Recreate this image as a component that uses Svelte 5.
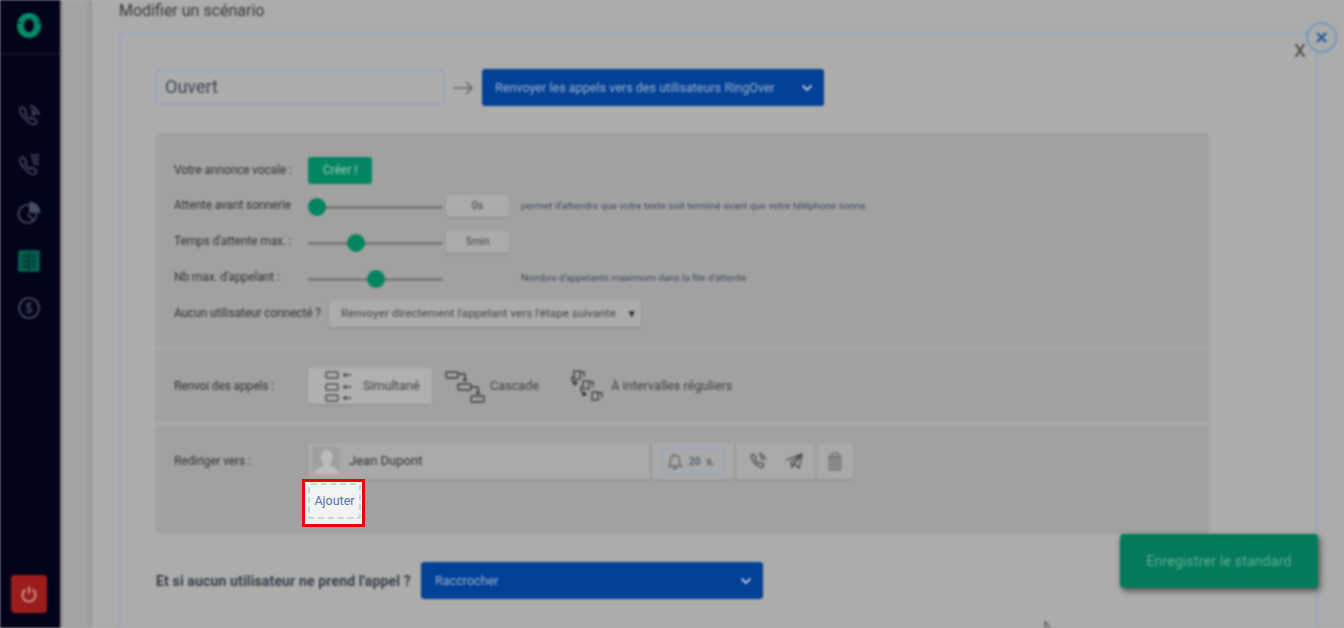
<script>
  const sliders = [
    { label: "Attente avant sonnerie", pct: 7, value: "0s", help: "permet d'attendre que votre texte soit terminé avant que votre téléphone sonne" },
    { label: "Temps d'attente max. :", pct: 35.5, value: "5min", help: "" },
    { label: "Nb max. d'appelant :", pct: 50, value: "", help: "Nombre d'appelants maximum dans la file d'attente" }
  ];
</script>

<div class="screen">
  <div class="blurred">
    <aside class="sidebar">
      <div class="logo">
        <svg width="24" height="25" viewBox="0 0 24 25">
          <path fill-rule="evenodd" fill="#05906b" d="M12 0C19 0 24 5.500 24 12.500S19 25 12 25 0 19.500 0 12.500 5 0 12 0ZM12 6C9 6 7 9 7 12.500S9 19 12 19 17 16 17 12.500 15 6 12 6Z"/>
          <path d="M0 9.500h4M20 9.500h4" stroke="#03332f" stroke-width="1.500"/>
        </svg>
      </div>
      <nav class="nav">
        <svg width="24" height="24" viewBox="0 0 24 24" fill="none" stroke="#49516a" stroke-width="1.600">
          <path d="M3 5c1-2 3-2 4-1l2 3c.5 1 0 2-1 3 1 2 3 4 5 5 1-1 2-1.500 3-1l3 2c1 1 .5 3-1 4-2 1-5 0-9-4S2 8 3 5Z"/>
          <path d="M13 2c4 0 8 4 9 9M14 6c2 0 4 2 4 5M15 9l2 2" stroke-width="2"/>
        </svg>
        <svg width="24" height="24" viewBox="0 0 24 24" fill="none" stroke="#49516a" stroke-width="1.600">
          <path d="M3 6c1-2 3-2 4-1l2 3c.5 1 0 2-1 3 1 2 3 4 5 5 1-1 2-1.500 3-1l3 2c1 1 .5 3-1 4-2 1-5 0-9-4S2 9 3 6Z"/>
          <path d="M14 2h8M14 5h8M15 8h7M16 11h6" stroke-width="1.500"/>
        </svg>
        <svg width="24" height="24" viewBox="0 0 24 24" fill="none" stroke="#49516a" stroke-width="1.700">
          <circle cx="10.500" cy="13" r="9"/>
          <path d="M13 1.500a9.500 9.500 0 0 1 9.500 9.500H13Z" fill="#49516a"/>
          <path d="M10.500 13l6 6"/>
        </svg>
        <svg width="22" height="22" viewBox="0 0 22 22" fill="#04604b" stroke="#05705a" stroke-width="1.500">
          <rect x="1" y="1" width="20" height="20" rx="1"/>
          <path d="M5 6h4M5 11h4M5 16h4M14 6h3M14 11h3M14 16h3M11 2v18" fill="none" stroke="#03252a"/>
        </svg>
        <svg width="24" height="24" viewBox="0 0 24 24" fill="none" stroke="#49516a" stroke-width="1.700">
          <circle cx="12" cy="12" r="10"/>
          <path d="M15 8.500c-1-1-5-1.500-5.500.8C9 12 15 11.500 14.700 14.500c-.3 2-4.500 2-5.700.5M12 6v12" stroke-width="1.300"/>
        </svg>
      </nav>
      <div class="power">
        <svg width="18" height="18" viewBox="0 0 18 18" fill="none" stroke="#cf9393" stroke-width="2.200">
          <path d="M5.500 4.500a6.500 6.500 0 1 0 7 0"/>
          <path d="M9 1.500v7"/>
        </svg>
      </div>
    </aside>

    <main class="main">
      <div class="page">
        <h1 class="title">Modifier un scénario</h1>
        <section class="card">
          <div class="head">
            <div class="name">Ouvert</div>
            <svg class="arrow" width="21" height="14" viewBox="0 0 21 14" fill="none" stroke="#6f6f6f" stroke-width="1.500">
              <path d="M0 7h19M13 1l6 6-6 6"/>
            </svg>
            <div class="blue">
              <span>Renvoyer les appels vers des utilisateurs RingOver</span>
              <svg width="12" height="8" viewBox="0 0 12 8" fill="none" stroke="#c4cfe4" stroke-width="1.800"><path d="M1.500 1.500 6 6l4.500-4.500"/></svg>
            </div>
          </div>

          <div class="panel">
            <div class="sec first">
              <div class="row">
                <span class="label">Votre annonce vocale :</span>
                <span class="create">Créer !</span>
              </div>
              {#each sliders as s}
                <div class="row">
                  <span class="label lifted">{s.label}</span>
                  <span class="track"><i class="thumb" style="left: {s.pct}%"></i></span>
                  {#if s.value}
                    <span class="value">{s.value}</span>
                  {:else}
                    <span class="value none"></span>
                  {/if}
                  <span class="help">{s.help}</span>
                </div>
              {/each}
              <div class="row">
                <span class="label auto lifted">Aucun utilisateur connecté ?</span>
                <span class="dropdown">Renvoyer directement l'appelant vers l'étape suivante <b>▾</b></span>
              </div>
            </div>

            <div class="sec second">
              <span class="label">Renvoi des appels :</span>
              <div class="tabs">
                <div class="tab active">
                  <svg width="27" height="34" viewBox="0 0 27 34" fill="none" stroke="#4f4f4f" stroke-width="1.400">
                    <rect x="1" y="3" width="12" height="6" rx="1"/><rect x="1" y="15" width="12" height="6" rx="1"/><rect x="1" y="26" width="12" height="6" rx="1"/>
                    <path d="M26 6h-7M26 18h-7M26 29h-7" stroke-width="1.300"/>
                    <path d="M21 3.500 17.500 6l3.500 2.500ZM21 15.500 17.500 18l3.500 2.500ZM21 26.500 17.500 29l3.500 2.500Z" fill="#4f4f4f" stroke="none"/>
                  </svg>
                  <span>Simultané</span>
                </div>
                <div class="tab cascade">
                  <svg width="40" height="34" viewBox="0 0 40 34" fill="none" stroke="#404040" stroke-width="1.400">
                    <rect x="1" y="3" width="12" height="6" rx="1"/><rect x="13" y="15" width="13" height="6" rx="1"/><rect x="26" y="27" width="13" height="6" rx="1"/>
                    <path d="M13 5h7v7M18 10l2 2 2-2M26 18h7v7M31 23l2 2 2-2"/>
                  </svg>
                  <span>Cascade</span>
                </div>
                <div class="tab interval">
                  <svg width="35" height="34" viewBox="0 0 35 34" fill="none" stroke="#404040" stroke-width="1.300">
                    <rect x="5" y="2" width="6" height="8" /><rect x="14" y="12" width="6" height="8"/><rect x="23" y="23" width="6" height="8"/>
                    <path d="M4 7c-2 2-2 5 1 6M13 17c-2 2-2 5 1 7M11 3h4v5M20 13h4v5M29 24h4v5" />
                    <circle cx="6" cy="14" r="1.700" fill="#404040"/><circle cx="15" cy="25" r="1.700" fill="#404040"/>
                  </svg>
                  <span>À intervalles réguliers</span>
                </div>
              </div>
            </div>

            <div class="sec third">
              <div class="redir">
                <span class="label">Rediriger vers :</span>
                <div class="tile user">
                  <svg class="avatar" width="27" height="27" viewBox="0 0 27 27">
                    <rect width="27" height="27" rx="2" fill="#a6a6a6"/>
                    <path d="M13.500 3c4 0 6 3 6 7s-2 6-3 8c2 2 8 2 10 9H1c2-7 8-7 10-9-1-2-3-4-3-8s2-7 5.500-7Z" fill="#c4c4c4"/>
                  </svg>
                  <span>Jean Dupont</span>
                </div>
                <div class="tile ring">
                  <div class="ringbox">
                    <svg width="16" height="17" viewBox="0 0 16 17" fill="none" stroke="#666" stroke-width="1.300">
                      <path d="M2 13c1.500-1.500 1.500-3 1.500-5.500S5 2 8 2s4.500 3 4.500 5.500.0 4 1.500 5.500ZM6 14.500c.5 2 3.500 2 4 0"/>
                    </svg>
                    <span>20</span><span>s.</span>
                  </div>
                </div>
                <div class="tile acts">
                  <svg width="18" height="18" viewBox="0 0 24 24" fill="none" stroke="#555" stroke-width="1.900">
                    <path d="M3 5c1-2 3-2 4-1l2 3c.5 1 0 2-1 3 1 2 3 4 5 5 1-1 2-1.500 3-1l3 2c1 1 .5 3-1 4-2 1-5 0-9-4S2 8 3 5Z"/>
                    <path d="M13 2c4 0 8 4 9 9M14 6c2 0 4 2 4 5"/>
                  </svg>
                  <svg width="18" height="18" viewBox="0 0 18 18" fill="none" stroke="#4a4a4a" stroke-width="1.300">
                    <path d="M1 8 17 2l-3 14-5-4-2 3-1-5L17 2 9 12"/>
                  </svg>
                </div>
                <div class="tile trash">
                  <svg width="16" height="19" viewBox="0 0 16 19" fill="#9a9a9a" stroke="#7d7d7d" stroke-width="1.600">
                    <path d="M1 4h14M5 3V1h6v2" fill="none"/>
                    <path d="M2.500 5.500V18h11V5.500Z"/>
                    <path d="M5.500 7v9M8 7v9M10.500 7v9" stroke-width="1"/>
                  </svg>
                </div>
              </div>
              <div class="slot" aria-hidden="true"></div>
            </div>
          </div>

          <div class="fallback">
            <strong>Et si aucun utilisateur ne prend l'appel ?</strong>
            <div class="blue wide">
              <span>Raccrocher</span>
              <svg width="12" height="8" viewBox="0 0 12 8" fill="none" stroke="#c4cfe4" stroke-width="1.800"><path d="M1.500 1.500 6 6l4.500-4.500"/></svg>
            </div>
          </div>

          <span class="x">X</span>
        </section>
      </div>

      <button class="save">Enregistrer le standard</button>
      <div class="close">
        <svg width="13" height="13" viewBox="0 0 13 13" stroke="#255ead" stroke-width="2.400"><path d="M2 2l9 9M11 2l-9 9"/></svg>
      </div>
      <svg class="cursor" width="12" height="14" viewBox="0 0 12 14"><path d="M1 1v11l3-3 4 1Z" fill="#a0a0a0" stroke="#444"/></svg>
    </main>
  </div>

  <div class="spotlight"><div class="add">Ajouter</div></div>
</div>

<style>
  :global(body) {
    margin: 0;
    background: #b1b1b1;
  }
  .screen {
    position: relative;
    width: 1344px;
    height: 628px;
    overflow: hidden;
    font-family: Roboto, "Liberation Sans", sans-serif;
  }
  .blurred {
    display: flex;
    width: 1344px;
    height: 628px;
    filter: blur(1px) brightness(0.96);
    overflow: hidden;
  }
  .sidebar {
    flex: 0 0 60px;
    width: 60px;
    height: 628px;
    box-sizing: border-box;
    padding-right: 3px;
    display: flex;
    flex-direction: column;
    align-items: center;
    background: #03031a;
    position: relative;
    z-index: 2;
    box-shadow: 1px 0 3px rgba(0, 0, 0, 0.4);
  }
  .logo {
    width: 60px;
    margin-right: -3px;
    padding-right: 3px;
    height: 55px;
    box-sizing: border-box;
    padding-top: 13px;
    display: flex;
    justify-content: center;
    border-bottom: 2px solid #14182f;
  }
  .nav {
    margin-top: 49px;
    display: flex;
    flex-direction: column;
    align-items: center;
    gap: 24.500px;
  }
  .power {
    margin-top: auto;
    margin-bottom: 15px;
    width: 36px;
    height: 38px;
    border-radius: 4px;
    background: #a21d1d;
    display: flex;
    align-items: center;
    justify-content: center;
  }
  .main {
    flex: 1;
    position: relative;
    height: 628px;
    background: #ababab;
    padding-left: 32px;
    box-sizing: border-box;
    overflow: hidden;
  }
  .page {
    height: 100%;
    background: #b2b2b2;
    box-shadow: -3px 0 5px rgba(0, 0, 0, 0.08);
    padding-left: 27px;
  }
  .title {
    margin: 0;
    padding-top: 2px;
    height: 32px;
    box-sizing: border-box;
    font-size: 16px;
    line-height: 18px;
    font-weight: 400;
    color: #3a3a3a;
  }
  .card {
    position: relative;
    width: 1199px;
    height: 640px;
    box-sizing: border-box;
    border: 2px solid #a2adbf;
    border-radius: 4px;
    padding: 35px 0 0 34px;
    background: #b3b3b3;
  }
  .head {
    display: flex;
    align-items: flex-start;
    height: 37px;
  }
  .name {
    width: 290px;
    height: 36px;
    box-sizing: border-box;
    border: 2px solid #a2adbf;
    border-radius: 4px;
    padding-left: 8px;
    font-size: 18px;
    line-height: 32px;
    color: #3f4858;
  }
  .arrow {
    margin: 12px 8px 0;
  }
  .blue {
    width: 342px;
    height: 37px;
    box-sizing: border-box;
    background: #02449c;
    border-radius: 3px;
    padding: 0 11px 0 13px;
    display: flex;
    align-items: center;
    justify-content: space-between;
    color: #a3b6d6;
    font-size: 12.600px;
    font-weight: 400;
  }
  .panel {
    margin-top: 27px;
    width: 1055px;
    height: 401px;
    background: #a8a8a8;
    border-radius: 6px;
    overflow: hidden;
  }
  .sec {
    box-sizing: border-box;
    padding-left: 19px;
    border-bottom: 3px solid #b0b0b0;
  }
  .first {
    height: 216px;
    padding-top: 19px;
  }
  .row {
    display: flex;
    align-items: center;
    height: 36px;
  }
  .label {
    flex: 0 0 134px;
    font-size: 12px;
    letter-spacing: -0.14px;
    color: #363636;
    white-space: nowrap;
  }
  .label.lifted {
    padding-bottom: 2px;
  }
  .label.auto {
    flex: 0 0 155px;
  }
  .create {
    width: 64px;
    height: 27px;
    line-height: 27px;
    text-align: center;
    border-radius: 3px;
    background: #048c66;
    color: #9fd0bf;
    font-size: 12px;
  }
  .track {
    position: relative;
    width: 135px;
    height: 3px;
    margin-top: 2px;
    background: #7f7f7f;
    border-radius: 2px;
  }
  .thumb {
    position: absolute;
    top: 50%;
    width: 18px;
    height: 18px;
    margin: -9px 0 0 -9px;
    border-radius: 50%;
    background: #048a65;
  }
  .value {
    width: 63px;
    height: 22px;
    margin-left: 3px;
    line-height: 22px;
    text-align: center;
    border-radius: 3px;
    background: #b2b2b2;
    box-shadow: 0 1px 2px rgba(0, 0, 0, 0.15);
    color: #444;
    font-size: 10.500px;
  }
  .value.none {
    background: none;
    box-shadow: none;
  }
  .help {
    margin-left: 12px;
    padding-bottom: 2px;
    font-size: 9.900px;
    color: #3e495c;
    white-space: nowrap;
  }
  .dropdown {
    width: 312px;
    height: 27px;
    margin-bottom: 2px;
    box-sizing: border-box;
    padding: 0 6px 0 12px;
    background: #b2b2b2;
    border-radius: 3px;
    box-shadow: 0 1px 2px rgba(0, 0, 0, 0.15);
    font-size: 11.750px;
    line-height: 27px;
    color: #4c4c4c;
    display: flex;
    justify-content: space-between;
    white-space: nowrap;
  }
  .dropdown b {
    font-size: 11px;
    color: #2c2f3d;
  }
  .second {
    height: 76px;
    display: flex;
    align-items: center;
    padding-top: 1px;
  }
  .tabs {
    display: flex;
    align-items: center;
    font-size: 12.700px;
    color: #444;
  }
  .tab {
    display: flex;
    align-items: center;
    height: 36px;
  }
  .tab span {
    padding-bottom: 2px;
  }
  .tab.active {
    width: 124px;
    box-sizing: border-box;
    padding-left: 17px;
    gap: 11px;
    background: #b7b7b7;
    border-radius: 2px;
    box-shadow: 0 1px 2px rgba(0, 0, 0, 0.12);
    margin-right: 13px;
  }
  .tab.cascade {
    gap: 5px;
    margin-right: 30px;
  }
  .tab.interval {
    gap: 7px;
  }
  .third {
    height: 109px;
    padding-top: 18px;
    border: 0;
  }
  .redir {
    display: flex;
    height: 36px;
    align-items: center;
  }
  .tile {
    height: 36px;
    box-sizing: border-box;
    display: flex;
    align-items: center;
    background: #b0b0b0;
    box-shadow: 0 1px 2px rgba(0, 0, 0, 0.12);
    margin-right: 2px;
  }
  .user {
    width: 342px;
    padding-left: 5px;
    padding-bottom: 1px;
    gap: 9px;
    font-size: 13px;
    color: #333;
  }
  .ring {
    width: 82px;
    justify-content: center;
  }
  .ringbox {
    width: 64px;
    height: 28px;
    box-sizing: border-box;
    border: 2px solid #a2adbf;
    border-radius: 4px;
    display: flex;
    align-items: center;
    padding-left: 4px;
    gap: 6px;
    font-size: 10px;
    font-weight: 500;
    color: #4a5268;
  }
  .acts {
    width: 79px;
    justify-content: center;
    gap: 18px;
  }
  .trash {
    width: 36px;
    justify-content: center;
    border-radius: 0 2px 2px 0;
    margin-right: 0;
  }
  .slot {
    height: 44px;
  }
  .fallback {
    margin-top: 28px;
    display: flex;
    align-items: center;
  }
  .fallback strong {
    flex: 0 0 265px;
    padding-left: 1px;
    font-size: 14px;
    font-weight: 700;
    letter-spacing: 0.15px;
    color: #38404c;
    white-space: nowrap;
  }
  .blue.wide {
    padding-left: 14px;
  }
  .x {
    position: absolute;
    top: 5px;
    right: 10px;
    font-size: 19px;
    color: #444;
  }
  .save {
    position: absolute;
    top: 534px;
    left: 1060px;
    width: 198px;
    height: 54px;
    border: 0;
    border-radius: 4px;
    background: #037f5d;
    color: #66b39c;
    font-family: Roboto, "Liberation Sans", sans-serif;
    font-size: 14px;
    letter-spacing: 0.2px;
    box-shadow: 2px 3px 6px rgba(0, 0, 0, 0.55);
  }
  .close {
    position: absolute;
    top: 22px;
    left: 1246px;
    width: 27px;
    height: 27px;
    border: 2px solid #7a9dca;
    border-radius: 50%;
    background: #b2b2b2;
    display: flex;
    align-items: center;
    justify-content: center;
  }
  .cursor {
    position: absolute;
    top: 620px;
    left: 984px;
  }
  .spotlight {
    position: absolute;
    left: 302px;
    top: 479px;
    width: 63px;
    height: 48px;
    box-sizing: border-box;
    border: 3px solid #f00000;
    background: #f3f3f3;
    padding: 1px 1px 0 3px;
  }
  .add {
    height: 36px;
    box-sizing: border-box;
    border: 2px dashed #d0d0d0;
    border-radius: 3px;
    color: #5172a8;
    font-size: 12.500px;
    line-height: 32px;
    text-align: center;
    white-space: nowrap;
  }
</style>
